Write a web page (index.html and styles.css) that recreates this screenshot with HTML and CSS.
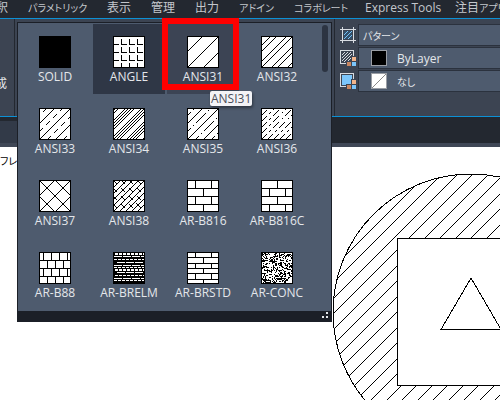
FILE: index.html
```
<!DOCTYPE html>
<html lang="ja">
  <head>
    <meta charset="UTF-8" />
    <meta name="viewport" content="width=device-width, initial-scale=1">
    <title>ハッチング作成</title>
    <link rel="stylesheet" href="styles.css">
  </head>
  <body>
    <nav class="menu">
      <button>釈</button>
      <button class="kana">パラメトリック</button>
      <button>表示</button>
      <button>管理</button>
      <button>出力</button>
      <button class="kana">アドイン</button>
      <button class="kana">コラボレート</button>
      <button>Express Tools</button>
      <button>注目<span class="kana">アプリ</span></button>
    </nav>

    <div class="ribbon">
      <div class="panel panel-create"><span>成</span></div>
      <div class="panel panel-pattern">
        <div class="gallery">
          <div class="gallery-body">
            <div class="patterns">
              <button class="pattern">
                <svg class="swatch" viewBox="0 0 32 32"><rect width="32" height="32" /></svg>
                SOLID
              </button>
              <button class="pattern selected">
                <svg class="swatch" viewBox="0 0 32 32"><rect class="frame" x=".5" y=".5" width="31" height="31" />
                  <path d="M1 8.5h5M1 16.5h5M1 24.5h5M8.5 3v5.5h5M16.5 3v5.5h5M24.5 3v5.5h5M8.5 11v5.5h5M16.5 11v5.5h5M24.5 11v5.5h5M8.5 19v5.5h5M16.5 19v5.5h5M24.5 19v5.5h5M8.5 27v4M16.5 27v4M24.5 27v4" /></svg>
                ANGLE
              </button>
              <button class="pattern hover">
                <svg class="swatch" viewBox="0 0 32 32"><rect class="frame" x=".5" y=".5" width="31" height="31" />
                  <path d="M0 16L16 0M0 32L32 0M16 32L32 16" /></svg>
                ANSI31
              </button>
              <button class="pattern">
                <svg class="swatch" viewBox="0 0 32 32"><rect class="frame" x=".5" y=".5" width="31" height="31" />
                  <path d="M0 10L10 0M0 16L16 0M0 26L26 0M0 32L32 0M10 32L32 10M16 32L32 16M26 32L32 26" /></svg>
                ANSI32
              </button>

              <button class="pattern">
                <svg class="swatch" viewBox="0 0 32 32"><rect class="frame" x=".5" y=".5" width="31" height="31" />
                  <path d="M0 16L16 0M0 32L32 0M16 32L32 16" />
                  <path stroke-dasharray="5 5" d="M4 4L8 0M0 24L24 0M8 32L32 8M24 32L32 24" /></svg>
                ANSI33
              </button>
              <button class="pattern">
                <svg class="swatch" viewBox="0 0 32 32"><rect class="frame" x=".5" y=".5" width="31" height="31" />
                  <path d="M0 3L3 0M0 6L6 0M0 13L13 0M0 16L16 0M0 19L19 0M0 22L22 0M0 29L29 0M0 32L32 0M3 32L32 3M6 32L32 6M13 32L32 13M16 32L32 16M19 32L32 19M22 32L32 22M29 32L32 29" /></svg>
                ANSI34
              </button>
              <button class="pattern">
                <svg class="swatch" viewBox="0 0 32 32"><rect class="frame" x=".5" y=".5" width="31" height="31" />
                  <path d="M0 16L16 0M0 32L32 0M16 32L32 16" />
                  <path stroke-dasharray="14 3 1 3" stroke-dashoffset="8" d="M0 8L8 0M0 24L24 0M8 32L32 8M24 32L32 24" /></svg>
                ANSI35
              </button>
              <button class="pattern">
                <svg class="swatch" viewBox="0 0 32 32"><rect class="frame" x=".5" y=".5" width="31" height="31" />
                  <path stroke-dasharray="9 3 2 3" d="M0 8L8 0M0 14L14 0M0 20L20 0M0 26L26 0M0 32L32 0M6 32L32 6M12 32L32 12M18 32L32 18M24 32L32 24" /></svg>
                ANSI36
              </button>

              <button class="pattern">
                <svg class="swatch" viewBox="0 0 32 32"><rect class="frame" x=".5" y=".5" width="31" height="31" />
                  <path d="M0 16L16 0M0 32L32 0M16 32L32 16M0 0L32 32M16 0L32 16M0 16L16 32" /></svg>
                ANSI37
              </button>
              <button class="pattern">
                <svg class="swatch" viewBox="0 0 32 32"><rect class="frame" x=".5" y=".5" width="31" height="31" />
                  <path d="M0 8L8 0M0 14L14 0M0 20L20 0M0 26L26 0M0 32L32 0M6 32L32 6M12 32L32 12M18 32L32 18M24 32L32 24" />
                  <path stroke-dasharray="6 5" d="M0 0L32 32M8 0L32 24M16 0L32 16M24 0L32 8M0 8L24 32M0 16L16 32M0 24L8 32" /></svg>
                ANSI38
              </button>
              <button class="pattern">
                <svg class="swatch" viewBox="0 0 32 32"><rect class="frame" x=".5" y=".5" width="31" height="31" />
                  <path d="M0 8.5h32M0 16.5h32M0 24.5h32M8.5 0v8M24.5 0v8M16.5 8v8M8.5 16v8M24.5 16v8M16.5 24v8" /></svg>
                AR-B816
              </button>
              <button class="pattern">
                <svg class="swatch" viewBox="0 0 32 32"><rect class="frame" x=".5" y=".5" width="31" height="31" />
                  <path d="M0 8.5h32M0 16.5h32M0 24.5h32M16.5 0v8M8.5 8v8M24.5 8v8M16.5 16v8M8.5 24v8M24.5 24v8" /></svg>
                AR-B816C
              </button>

              <button class="pattern">
                <svg class="swatch" viewBox="0 0 32 32"><rect class="frame" x=".5" y=".5" width="31" height="31" />
                  <path d="M0 8.5h32M0 16.5h32M0 24.5h32M4.5 0v8M12.5 0v8M20.5 0v8M28.5 0v8M8.5 8v8M16.5 8v8M24.5 8v8M4.5 16v8M12.5 16v8M20.5 16v8M28.5 16v8M8.5 24v8M16.5 24v8M24.5 24v8" /></svg>
                AR-B88
              </button>
              <button class="pattern">
                <svg class="swatch" viewBox="0 0 32 32"><rect width="32" height="32" />
                  <g class="light">
                    <path stroke-width="2" stroke-dasharray="3 1" d="M2 2h29M2 18h29" />
                    <path stroke-dasharray="8 1" d="M1 4.5h30M4 10.5h27M1 13.5h30M4 20.5h27M1 26.5h30" />
                    <path stroke-dasharray="3 1" d="M1 7.5h30M1 15.5h30M2 23.5h29M1 28.5h30" />
                  </g></svg>
                AR-BRELM
              </button>
              <button class="pattern">
                <svg class="swatch" viewBox="0 0 32 32"><rect class="frame" x=".5" y=".5" width="31" height="31" />
                  <path d="M0 5.5h32M0 11.5h32M0 16.5h32M0 21.5h32M0 27.5h32M8.5 0v5M24.5 0v5M16.5 6v5M8.5 12v4M24.5 12v4M16.5 17v4M8.5 22v5M24.5 22v5M16.5 28v4" /></svg>
                AR-BRSTD
              </button>
              <button class="pattern">
                <svg class="swatch" viewBox="0 0 32 32"><rect class="frame" x=".5" y=".5" width="31" height="31" />
                  <path id="concrete" /></svg>
                AR-CONC
              </button>
            </div>
            <div class="scrollbar"></div>
          </div>
          <div class="gallery-footer">
            <svg class="grip" viewBox="0 0 6 6"><path d="M4 0h2v2h-2zM0 4h2v2h-2zM4 4h2v2h-2z" /></svg>
          </div>
          <div class="marker"></div>
          <div class="tooltip" role="tooltip">ANSI31</div>
        </div>
      </div>

      <div class="panel panel-props">
        <label class="icon" for="type" aria-label="パターン">
          <svg viewBox="0 0 16 16"><rect x="4" y="4" width="8" height="8" fill="#34506b" />
            <path stroke="#76c2f7" d="M4 8L8 4M4 12L12 4M8 12L12 8" />
            <path stroke="#d9dde2" d="M2.5 0v16M13.5 0v16M0 2.5h16M0 13.5h16" /></svg>
        </label>
        <div class="field">
          <select id="type" class="kana"><option>パターン</option></select>
        </div>
        <label class="icon" for="color" aria-label="色">
          <svg viewBox="0 0 16 16"><path stroke="#d9dde2" d="M.5 .5h13v13h-13z" />
            <path stroke="#d9dde2" d="M2 5L5 2M2 8L8 2M2 11L11 2M4 12L12 4M7 12L12 7" />
            <path fill="#3c4452" d="M11 6h5v10h-10v-5h5z" />
            <path fill="#f2b48a" d="M12 7h4v4h-4z" /><path fill="#c98660" d="M7 12h4v4h-4z" /><path fill="#7cc6fb" d="M12 12h4v4h-4z" /></svg>
        </label>
        <div class="field">
          <span class="chip chip-black"></span>
          <select id="color"><option>ByLayer</option></select>
        </div>
        <label class="icon" for="background" aria-label="背景色">
          <svg viewBox="0 0 16 16"><path stroke="#d9dde2" d="M.5 .5h13v13h-13z" />
            <path fill="#7cc6fb" d="M2 2h10v10h-10z" />
            <path fill="#3c4452" d="M11 6h5v10h-10v-5h5z" />
            <path fill="#f2b48a" d="M12 7h4v4h-4z" /><path fill="#c98660" d="M7 12h4v4h-4z" /><path fill="#7cc6fb" d="M12 12h4v4h-4z" /></svg>
        </label>
        <div class="field">
          <svg class="chip" viewBox="0 0 14 14"><path stroke="#888" d="M0 14L14 0" /></svg>
          <select id="background" class="kana"><option>なし</option></select>
        </div>
      </div>
    </div>

    <div class="file-tabs"><div class="tab"></div></div>

    <main class="canvas">
      <span class="view-name kana">フレー</span>
      <svg class="drawing" viewBox="0 0 280 280">
        <defs>
          <clipPath id="ring"><path clip-rule="evenodd" d="M139 1a138 138 0 1 0 .1 0zM65 65h147v147h-147z" /></clipPath>
        </defs>
        <path id="hatch" clip-path="url(#ring)" />
        <circle cx="139" cy="139" r="138" />
        <path d="M65.5 65.5h147v147h-147zM139 105l30 51.5h-60z" />
      </svg>
    </main>

    <script>
      // 45 degree hatch lines of the ring
      let lines = "";
      for (let c = 2.5; c < 560; c += 15.5) {
        const end = Math.round(c);
        lines += "M0 " + end + "L" + end + " 0";
      }
      document.getElementById("hatch").setAttribute("d", lines);

      // speckles of the concrete swatch
      let seed = 7;
      let dots = "";
      for (let y = 1; y < 31; y++) {
        for (let x = 1; x < 31; x++) {
          seed = (seed * 16807) % 2147483647;
          if (seed / 2147483647 < 0.42) dots += "M" + x + " " + (y + 0.5) + "h1";
        }
      }
      document.getElementById("concrete").setAttribute("d", dots);
    </script>
  </body>
</html>
```
FILE: styles.css
```
* {
  box-sizing: border-box;
}

body {
  margin: 0;
  min-height: 100vh;
  display: flex;
  flex-direction: column;
  background-color: #fff;
  color: #e4e7eb;
  font-family: "Open Sans", "Noto Sans CJK JP", sans-serif;
  font-size: 12px;
}

button,
select {
  padding: 0;
  border: none;
  background: none;
  color: inherit;
  font: inherit;
  white-space: nowrap;
}

svg {
  display: block;
  fill: none;
}

.kana,
select.kana {
  font-family: "Noto Sans CJK JP", sans-serif;
  font-size: 10px;
  font-feature-settings: "palt";
}

.menu {
  display: grid;
  grid-template-columns: 8px 59px 24px 24px 24px 35px 51px 70px 1fr;
  column-gap: 20px;
  height: 18px;
  padding-bottom: 2px;
  overflow: hidden;
  background-color: #232830;
  color: #c3c7cc;
}

.menu button {
  line-height: 16px;
  text-align: left;
}

.menu button:first-child {
  margin-left: -4px;
}

.menu button.kana {
  font-family: "Noto Sans CJK JP", sans-serif;
  font-size: 10px;
}

.ribbon {
  display: flex;
  height: 99px;
  border-top: 1px solid #0c91d6;
  border-bottom: 1px solid #0c91d6;
  background-color: #3c4452;
}

.panel-create {
  width: 15px;
  padding-top: 55px;
  overflow: hidden;
  border-right: 1px solid #232830;
}

.panel-create span {
  display: block;
  margin-left: -5px;
}

.panel-pattern {
  position: relative;
  flex: none;
  width: 320px;
  border-right: 1px solid #232830;
}

/* drop-down gallery */
.gallery {
  position: absolute;
  z-index: 1;
  top: 3px;
  left: 2px;
  width: 315px;
  border: 1px solid #1b1f27;
  background-color: #4e5b6e;
}

.gallery-body {
  display: flex;
  gap: 9px;
  padding: 1px;
}

.patterns {
  display: grid;
  grid-template-columns: repeat(4, 72px);
  gap: 2px;
}

.pattern {
  display: flex;
  flex-direction: column;
  align-items: center;
  height: 70px;
  padding-top: 12px;
  line-height: 18px;
}

.pattern.selected {
  background-color: #2f3746;
}

.pattern.hover {
  background-color: #3c4454;
}

.swatch {
  width: 32px;
  height: 32px;
  stroke: #000;
  shape-rendering: crispEdges;
}

.swatch rect {
  fill: #000;
  stroke: none;
}

.swatch .frame {
  fill: #fff;
  stroke: #000;
}

.swatch .light {
  stroke: #fff;
}

.scrollbar {
  width: 6px;
  height: 47px;
  margin-top: 1px;
  border-radius: 3px;
  background-color: #2c3442;
}

.gallery-footer {
  display: flex;
  justify-content: flex-end;
  height: 10px;
  padding: 1px 3px;
  background-color: #1b1f27;
}

.grip {
  width: 6px;
  height: 6px;
  fill: #e4e7eb;
}

.marker {
  position: absolute;
  top: -5px;
  left: 144px;
  width: 77px;
  height: 72px;
  border: 6px solid #f00;
}

.tooltip {
  position: absolute;
  top: 68px;
  left: 192px;
  padding: 0 1px;
  border-radius: 2px;
  background-color: #f3f3f6;
  box-shadow: 1px 2px 3px rgba(0, 0, 0, 0.4);
  color: #4a4d58;
  line-height: 15px;
}

/* pattern type, colour and background */
.panel-props {
  flex: 1;
  display: grid;
  grid-template-columns: 16px 1fr;
  grid-auto-rows: 22px;
  align-content: start;
  align-items: center;
  gap: 1px 2px;
  padding: 5px 0 0 5px;
}

.icon svg {
  width: 16px;
  height: 16px;
  shape-rendering: crispEdges;
}

.field {
  display: flex;
  align-items: center;
  gap: 10px;
  height: 22px;
  padding-left: 4px;
  border: 1px solid #2b323e;
  border-right: none;
  background-color: #4e5b6e;
}

.field select {
  flex: 1;
  min-width: 0;
  appearance: none;
}

.chip {
  flex: none;
  width: 16px;
  height: 16px;
  margin-left: 8px;
  border: 1px solid #9a9ea5;
  background-color: #fff;
}

.chip-black {
  background-color: #000;
}

.file-tabs {
  height: 30px;
  padding-top: 4px;
  border-bottom: 4px solid #3f4756;
  background-color: #232830;
}

.tab {
  width: 80px;
  height: 22px;
  background-color: #323a48;
}

.canvas {
  position: relative;
  flex: 1;
  overflow: hidden;
  background-color: #fff;
  color: #000;
}

.view-name {
  display: block;
  width: 30px;
  padding-top: 6px;
  white-space: nowrap;
}

.drawing {
  position: absolute;
  top: 26px;
  left: 332px;
  width: 280px;
  height: 280px;
  stroke: #000;
  shape-rendering: crispEdges;
}
```
